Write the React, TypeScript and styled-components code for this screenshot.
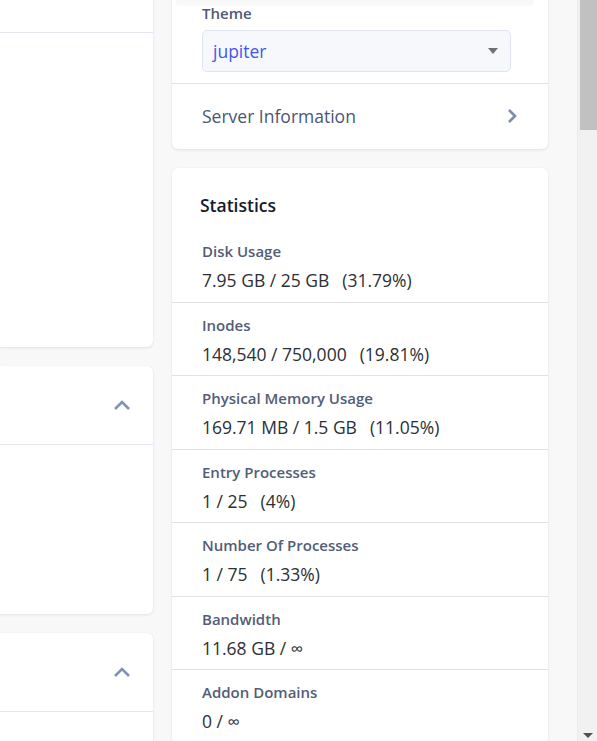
import React from "react";
import styled, { createGlobalStyle } from "styled-components";

const Global = createGlobalStyle`
  html, body { margin: 0; padding: 0; }
  body {
    background: #f8f8f8;
    font-family: "Open Sans", "Noto Sans", sans-serif;
    overflow: hidden;
  }
  * { box-sizing: border-box; }
`;

const Page = styled.div`
  display: flex;
  height: 741px;
  overflow: hidden;
`;

const LeftColumn = styled.div`
  width: 153px;
  flex: 0 0 153px;
  display: flex;
  flex-direction: column;
  gap: 19px;
  margin-top: -20px;
`;

const RightColumn = styled.div`
  width: 376px;
  flex: 0 0 376px;
  margin-left: 19px;
  display: flex;
  flex-direction: column;
  gap: 19px;
  margin-top: -20px;
`;

const Card = styled.div<{ $cut?: boolean }>`
  flex-shrink: 0;
  background: #fff;
  border-radius: ${(p) => (p.$cut ? "0 6px 6px 0" : "6px")};
  box-shadow: 0 1px 3px rgba(0, 0, 0, 0.09), 0 0 1px rgba(0, 0, 0, 0.06);
  overflow: hidden;
`;

const BlankBody = styled.div<{ $h: number }>`
  height: ${(p) => p.$h}px;
`;

const PanelHeader = styled.div`
  height: 79px;
  display: flex;
  align-items: center;
  justify-content: flex-end;
  padding: 0 22px 0 0;
  border-bottom: 1px solid #e1e6f0;
`;

const TopDivider = styled.div`
  border-bottom: 1px solid #e1e6f0;
`;

const TopFade = styled.div`
  height: 26px;
  background: linear-gradient(#fff 0, #fff 14px, #f6f6f6 15px, #fafafa 26px);
  margin: 0 14px 0 4px;
  border-radius: 0 0 4px 4px;
`;

const Field = styled.div`
  padding: 0 37px 11px 30px;
`;

const FieldLabel = styled.div`
  font-size: 15px;
  font-weight: 600;
  color: #505a73;
  line-height: 20px;
  margin-top: -3px;
  margin-bottom: 7px;
`;

const Select = styled.div`
  height: 42px;
  border: 1px solid #dfe4f0;
  border-radius: 5px;
  background: #f6f8fc;
  display: flex;
  align-items: center;
  justify-content: space-between;
  padding: 0 12px 0 10px;
  font-size: 17.5px;
  color: #4257ee;
`;

const Caret = styled.span`
  width: 0;
  height: 0;
  border-left: 5px solid transparent;
  border-right: 5px solid transparent;
  border-top: 6px solid #707070;
`;

const LinkRow = styled.div`
  height: 66px;
  border-top: 1px solid #e2e2e2;
  display: flex;
  align-items: center;
  justify-content: space-between;
  padding: 0 31px 2px 30px;
  font-size: 17.5px;
  color: #4a5675;
`;

const StatsTitle = styled.h2`
  margin: 0;
  padding: 25px 28px 12px;
  font-size: 17.5px;
  line-height: 24px;
  font-weight: 600;
  color: #141b2d;
`;

const StatRow = styled.div`
  padding: 12px 30px 9.5px;
  border-bottom: 1px solid #e2e2e2;
`;

const StatLabel = styled.div`
  font-size: 15px;
  font-weight: 600;
  line-height: 20px;
  color: #535d77;
  margin-bottom: 7px;
`;

const StatValue = styled.div`
  font-size: 17.5px;
  line-height: 24px;
  color: #2c2f36;
`;

const Percent = styled.span`
  margin-left: 13px;
`;

const Gutter = styled.div`
  flex: 1;
`;

const Scrollbar = styled.div`
  width: 20px;
  flex: 0 0 20px;
  background: #f1f1f1;
  border-left: 1px solid #ebebeb;
  display: flex;
  flex-direction: column;
  align-items: center;
  padding-left: 1px;
`;

const Thumb = styled.div`
  width: 17px;
  height: 130px;
  flex-shrink: 0;
  background: #c1c1c1;
`;

const ScrollSpacer = styled.div`
  flex: 1;
`;

const ScrollArrow = styled.div`
  width: 0;
  height: 0;
  border-left: 5px solid transparent;
  border-right: 5px solid transparent;
  border-top: 5px solid #505050;
  margin-bottom: 3px;
`;

const ChevronUp = () => (
  <svg width="18" height="11" viewBox="0 0 18 11">
    <path d="M2 9 L9 2 L16 9" fill="none" stroke="#8093b3" strokeWidth="2.6" />
  </svg>
);

const ChevronRight = () => (
  <svg width="10" height="16" viewBox="0 0 10 16">
    <path d="M2 2 L8 8 L2 14" fill="none" stroke="#7c8cab" strokeWidth="2.6" />
  </svg>
);

const stats: { label: string; value: string; pct?: string }[] = [
  { label: "Disk Usage", value: "7.95 GB / 25 GB", pct: "(31.79%)" },
  { label: "Inodes", value: "148,540 / 750,000", pct: "(19.81%)" },
  { label: "Physical Memory Usage", value: "169.71 MB / 1.5 GB", pct: "(11.05%)" },
  { label: "Entry Processes", value: "1 / 25", pct: "(4%)" },
  { label: "Number Of Processes", value: "1 / 75", pct: "(1.33%)" },
  { label: "Bandwidth", value: "11.68 GB / ∞" },
  { label: "Addon Domains", value: "0 / ∞" },
];

export default function App() {
  return (
    <>
      <Global />
      <Page>
        <LeftColumn>
          <Card $cut>
            <BlankBody $h={52} />
            <TopDivider />
            <BlankBody $h={314} />
          </Card>
          <Card $cut>
            <PanelHeader>
              <ChevronUp />
            </PanelHeader>
            <BlankBody $h={169} />
          </Card>
          <Card $cut>
            <PanelHeader>
              <ChevronUp />
            </PanelHeader>
            <BlankBody $h={120} />
          </Card>
        </LeftColumn>
        <RightColumn>
          <Card>
            <TopFade />
            <Field>
              <FieldLabel>Theme</FieldLabel>
              <Select>
                <span>jupiter</span>
                <Caret />
              </Select>
            </Field>
            <LinkRow>
              <span>Server Information</span>
              <ChevronRight />
            </LinkRow>
          </Card>
          <Card>
            <StatsTitle>Statistics</StatsTitle>
            {stats.map((s) => (
              <StatRow key={s.label}>
                <StatLabel>{s.label}</StatLabel>
                <StatValue>
                  {s.value}
                  {s.pct && <Percent>{s.pct}</Percent>}
                </StatValue>
              </StatRow>
            ))}
          </Card>
        </RightColumn>
        <Gutter />
        <Scrollbar>
          <Thumb />
          <ScrollSpacer />
          <ScrollArrow />
        </Scrollbar>
      </Page>
    </>
  );
}
